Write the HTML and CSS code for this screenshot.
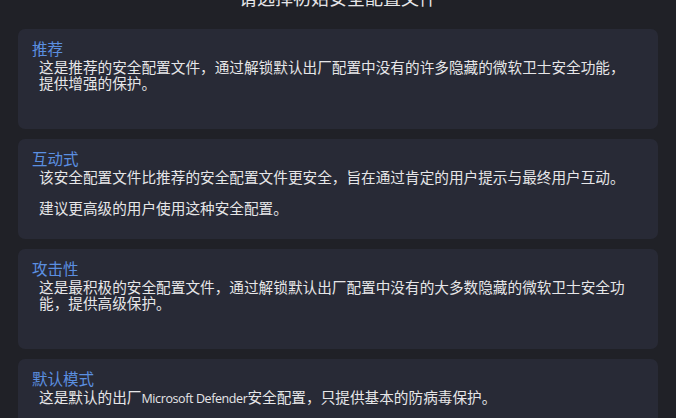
FILE: index.html
```html
<!DOCTYPE html>
<html lang="zh-CN">
<head>
    <meta charset="UTF-8">
    <title>安全配置文件</title>
    <link rel="stylesheet" href="styles.css">
</head>
<body>

    <!-- Title (page is scrolled a little) -->
    <h1 class="title">请选择初始安全配置文件</h1>

    <!-- Profiles -->
    <div class="profiles">
        <div class="profile">
            <h3>推荐</h3>
            <p>这是推荐的安全配置文件，通过解锁默认出厂配置中没有的许多隐藏的微软卫士安全功能，提供增强的保护。</p>
        </div>

        <div class="profile">
            <h3>互动式</h3>
            <p>该安全配置文件比推荐的安全配置文件更安全，旨在通过肯定的用户提示与最终用户互动。</p>
            <p>建议更高级的用户使用这种安全配置。</p>
        </div>

        <div class="profile">
            <h3>攻击性</h3>
            <p>这是最积极的安全配置文件，通过解锁默认出厂配置中没有的大多数隐藏的微软卫士安全功能，提供高级保护。</p>
        </div>

        <div class="profile">
            <h3>默认模式</h3>
            <p>这是默认的出厂<span class="latin">Microsoft Defender</span>安全配置，只提供基本的防病毒保护。</p>
        </div>
    </div>

</body>
</html>
```

FILE: styles.css
```css
body {
    margin: 0;
    padding: 0;
    background-color: #202127;
    color: #e6e6e8;
    font-family: "Noto Sans CJK SC", "Noto Sans", sans-serif;
    overflow: hidden;
}
.title {
    margin: -15px 0 20px 0;
    text-align: center;
    font-size: 18px;
    line-height: 24px;
    font-weight: normal;
    color: #e6e6e8;
}
.profiles {
    display: flex;
    flex-direction: column;
    gap: 10px;
    padding: 0 18px;
}
.profile {
    height: 100px;
    box-sizing: border-box;
    background-color: #282a36;
    border-radius: 7px;
    padding: 10px 26px 0 14px;
}
.profile h3 {
    margin: 0 0 2px 0;
    font-size: 15.5px;
    line-height: 18px;
    font-weight: normal;
    color: #5b8fe0;
}
.profile p {
    margin: 0 0 15px 7px;
    font-size: 14.65px;
    line-height: 15.5px;
}
.profile .latin {
    font-family: "Open Sans", sans-serif;
    font-size: 12.5px;
    letter-spacing: -0.4px;
}
```
